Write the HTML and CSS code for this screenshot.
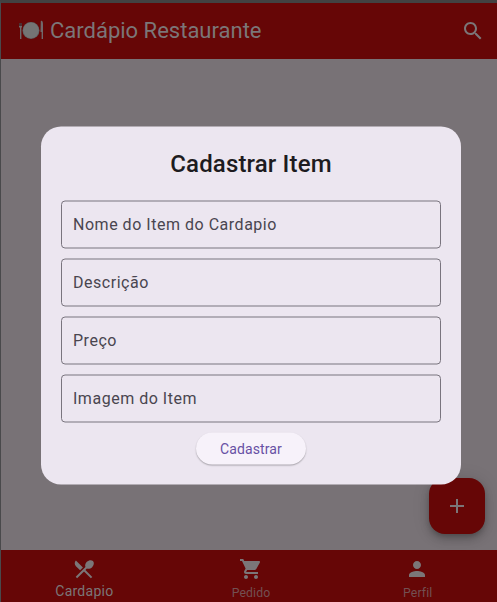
FILE: index.html
```html
<!DOCTYPE html>
<html lang="pt-BR">
<head>
<meta charset="utf-8">
<title>Cardápio Restaurante</title>
<link rel="stylesheet" href="styles.css">
</head>
<body>
<div class="app">
  <header class="appbar">
    <svg class="plate" viewBox="0 0 26 22" width="26" height="22">
      <path class="dark" d="M1 3h3v4H1z"/>
      <path class="metal" d="M2 7h1.4v12H2zM1 6h3v1.5H1zM22.8 1c1.5-.8 2.2 1 2.2 3v15h-1.4v-7h-1.1z"/>
      <circle class="rim" cx="13" cy="10.5" r="8.5"/>
      <circle class="dish" cx="13" cy="10.3" r="7.9"/>
    </svg>
    <h1>Cardápio Restaurante</h1>
    <svg class="search" viewBox="0 0 24 24" width="24" height="24"><path d="M15.5 14h-.79l-.28-.27C15.41 12.59 16 11.11 16 9.5 16 5.91 13.09 3 9.5 3S3 5.91 3 9.5 5.91 16 9.5 16c1.61 0 3.09-.59 4.23-1.57l.27.28v.79l5 4.99L20.49 19l-4.99-5zm-6 0C7.01 14 5 11.99 5 9.5S7.01 5 9.5 5 14 7.01 14 9.5 11.99 14 9.5 14z"/></svg>
  </header>
  <main class="content"></main>
  <nav class="tabs">
    <div class="tab active">
      <svg viewBox="0 0 24 24" width="24" height="24"><path d="M8.1 13.34l2.83-2.83L3.91 3.5c-1.56 1.56-1.56 4.09 0 5.66l4.19 4.18zm6.78-1.81c1.53.71 3.68.21 5.27-1.38 1.91-1.91 2.28-4.65.81-6.12-1.46-1.46-4.2-1.1-6.12.81-1.59 1.59-2.09 3.74-1.38 5.27L3.7 19.87l1.41 1.41L12 14.41l6.88 6.88 1.41-1.41L13.41 13l1.47-1.47z"/></svg>
      <span>Cardapio</span>
    </div>
    <div class="tab">
      <svg viewBox="0 0 24 24" width="24" height="24"><path d="M7 18c-1.1 0-1.99.9-1.99 2S5.9 22 7 22s2-.9 2-2-.9-2-2-2zM1 2v2h2l3.6 7.59-1.35 2.45c-.16.28-.25.61-.25.96 0 1.1.9 2 2 2h12v-2H7.42c-.14 0-.25-.11-.25-.25l.03-.12.9-1.63h7.45c.75 0 1.41-.41 1.75-1.03l3.58-6.49c.08-.14.12-.31.12-.48 0-.55-.45-1-1-1H5.21l-.94-2H1zm16 16c-1.1 0-1.99.9-1.99 2s.89 2 1.99 2 2-.9 2-2-.9-2-2-2z"/></svg>
      <span>Pedido</span>
    </div>
    <div class="tab">
      <svg viewBox="0 0 24 24" width="24" height="24"><path d="M12 12c2.21 0 4-1.79 4-4s-1.79-4-4-4-4 1.79-4 4 1.79 4 4 4zm0 2c-2.67 0-8 1.34-8 4v2h16v-2c0-2.66-5.33-4-8-4z"/></svg>
      <span>Perfil</span>
    </div>
  </nav>
  <div class="fab"><svg viewBox="0 0 24 24" width="24" height="24"><path d="M19 13h-6v6h-2v-6H5v-2h6V5h2v6h6v2z"/></svg></div>
  <section class="dialog">
    <h2>Cadastrar Item</h2>
    <div class="field">Nome do Item do Cardapio</div>
    <div class="field">Descrição</div>
    <div class="field">Preço</div>
    <div class="field">Imagem do Item</div>
    <div class="submit">Cadastrar</div>
  </section>
</div>
</body>
</html>
```
FILE: styles.css
```css
* { box-sizing: border-box; }
body { margin: 0; font-family: Roboto, "Liberation Sans", sans-serif; background: #3e3e3f; }
.app {
  position: relative;
  height: 602px;
  border-top: 3px solid #424242;
  border-left: 1px solid #49494b;
  display: flex;
  flex-direction: column;
  overflow: hidden;
}
.appbar {
  height: 56px;
  flex: none;
  display: flex;
  align-items: center;
  padding: 0 12px 0 17px;
  background: #660606;
  color: #7b7678;
}
.appbar h1 { margin: 0 auto 0 6px; font-size: 22px; font-weight: 400; line-height: 28px; }
.search { fill: #7b7678; }
.plate .dark { fill: #4b3032; }
.plate .metal { fill: #70696b; }
.plate .rim { fill: #5d5f60; }
.plate .dish { fill: #747474; }
.content { flex: 1; background: #787276; }
.tabs {
  height: 52px;
  flex: none;
  display: grid;
  grid-template-columns: repeat(3, 166.7px);
  background: #660606;
}
.tab {
  display: flex;
  flex-direction: column;
  align-items: center;
  padding-top: 7px;
  font-size: 12.25px;
  letter-spacing: .1px;
  line-height: 25px;
  color: #735052;
}
.tab svg { flex: none; fill: #7b7678; }
.tab.active { font-size: 14px; letter-spacing: .25px; line-height: 20px; color: #7b7678; }
.tab svg { margin-right: 1px; }
.fab {
  position: absolute;
  right: 12px;
  bottom: 68px;
  width: 56px;
  height: 56px;
  display: grid;
  place-items: center;
  border-radius: 16px;
  background: #660606;
  box-shadow: 0 3px 5px -1px rgba(0,0,0,.2), 0 6px 10px rgba(0,0,0,.14), 0 1px 18px rgba(0,0,0,.12);
}
.fab svg { fill: #7b7678; }
.dialog {
  position: absolute;
  top: 123px;
  left: 40px;
  width: 420px;
  height: 358px;
  padding: 21px 20px 20px;
  display: flex;
  flex-direction: column;
  align-items: center;
  gap: 10px;
  border-radius: 20px;
  background: #ece6f0;
  transform: translateY(.5px);
}
.dialog h2 { margin: 0 0 11px; font-size: 24px; font-weight: 500; letter-spacing: .15px; line-height: 32px; color: #1d1b20; }
.field {
  width: 380px;
  height: 48px;
  padding: 0 11px;
  border: 1px solid #79747e;
  border-radius: 4px;
  font-size: 16px;
  line-height: 46px;
  letter-spacing: .52px;
  color: #49454f;
}
.submit {
  width: 110px;
  height: 32px;
  border-radius: 16px;
  background: #f7f2fa;
  box-shadow: 0 1px 1.5px rgba(0,0,0,.3);
  text-align: center;
  font-size: 14px;
  letter-spacing: .1px;
  line-height: 32px;
  color: #6750a4;
}
```
